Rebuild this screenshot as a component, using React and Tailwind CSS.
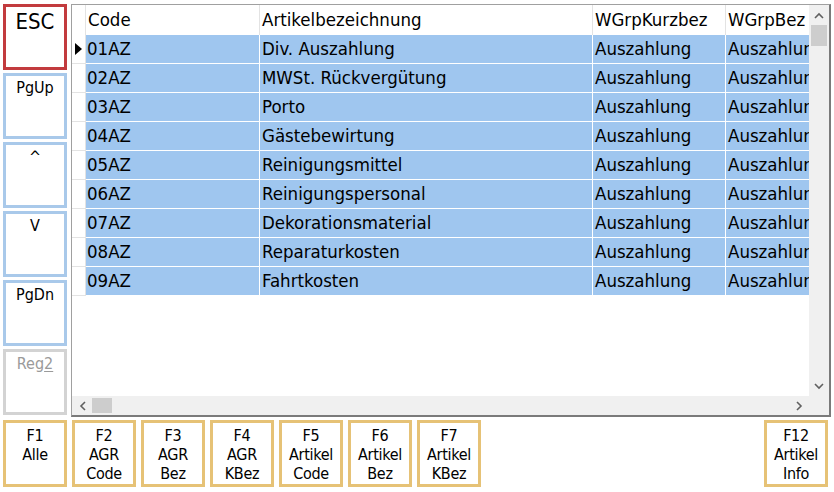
import React from "react";

const rows = [
  ["01AZ", "Div. Auszahlung"],
  ["02AZ", "MWSt. Rückvergütung"],
  ["03AZ", "Porto"],
  ["04AZ", "Gästebewirtung"],
  ["05AZ", "Reinigungsmittel"],
  ["06AZ", "Reinigungspersonal"],
  ["07AZ", "Dekorationsmaterial"],
  ["08AZ", "Reparaturkosten"],
  ["09AZ", "Fahrtkosten"],
];

const font = { fontFamily: "Tahoma, 'DejaVu Sans Condensed', 'DejaVu Sans', sans-serif" };

function SideBtn({ label, tone }) {
  const cls =
    tone === "red"
      ? "border-[#c23b3e] text-[22px] text-black"
      : tone === "grey"
      ? "border-[#d3d3d3] text-[16px] text-[#9a9a9a]"
      : "border-[#a9c9ea] text-[16px] text-black";
  return (
    <div className={`h-[66px] w-[64px] border-[3px] bg-white flex justify-center leading-none pt-[4px] ${cls}`}>
      {label}
    </div>
  );
}

function FBtn({ lines }) {
  return (
    <div className="h-[67px] w-[64px] shrink-0 border-[3px] border-[#e6c276] bg-white flex flex-col items-center pt-[3px] text-[16px] leading-[19px] text-black tracking-[-0.3px]">
      {lines.map((l, i) => (
        <span key={i}>{l}</span>
      ))}
    </div>
  );
}

export default function App() {
  return (
    <div className="w-[834px] h-[492px] bg-white overflow-hidden" style={font}>
      <div className="flex pt-[4px] pl-[3px] gap-[4px]">
        <div className="flex flex-col gap-[3px] w-[64px] shrink-0">
          <SideBtn label="ESC" tone="red" />
          <SideBtn label="PgUp" />
          <SideBtn label="^" />
          <SideBtn label="V" />
          <SideBtn label="PgDn" />
          <SideBtn label={<span>Reg<span className="underline underline-offset-2">2</span></span>} tone="grey" />
        </div>
        <div className="w-[760px] h-[413px] shrink-0 border-t border-l border-[#a0a0a0] border-r-2 border-b-2 border-r-[#7a7a7a] border-b-[#7a7a7a] flex flex-col">
          <div className="flex flex-1 min-h-0">
            <div className="flex-1 min-w-0 overflow-hidden flex flex-col text-[18.5px] leading-none text-black">
              <div className="flex h-[30px] bg-white shrink-0">
                <div className="w-[14px] shrink-0 border-r border-[#e3e3e3]" />
                <div className="w-[174px] shrink-0 border-r border-[#e3e3e3] flex items-center pl-[2px]">Code</div>
                <div className="w-[333px] shrink-0 border-r border-[#e3e3e3] flex items-center pl-[2px]">Artikelbezeichnung</div>
                <div className="w-[133px] shrink-0 border-r border-[#e3e3e3] flex items-center pl-[2px]">WGrpKurzbez</div>
                <div className="flex-1 min-w-0 flex items-center pl-[2px] whitespace-nowrap overflow-hidden">WGrpBez</div>
              </div>
              {rows.map(([c, n], i) => (
                <div key={c} className="flex h-[29px] shrink-0">
                  <div className="w-[14px] shrink-0 bg-white border-b border-r border-[#e3e3e3] flex items-center">
                    {i === 0 && (
                      <svg width="8" height="12" viewBox="0 0 8 12" className="ml-[3px]">
                        <path d="M0 0 L7 6 L0 12 Z" fill="#000" />
                      </svg>
                    )}
                  </div>
                  <div className="flex flex-1 min-w-0 bg-[#9fc6ef] border-b border-white">
                    <div className="w-[174px] shrink-0 border-r border-white flex items-center pl-[1px]">{c}</div>
                    <div className="w-[333px] shrink-0 border-r border-white flex items-center pl-[2px]">{n}</div>
                    <div className="w-[133px] shrink-0 border-r border-white flex items-center pl-[2px]">Auszahlung</div>
                    <div className="flex-1 min-w-0 flex items-center pl-[2px] whitespace-nowrap overflow-hidden">Auszahlung</div>
                  </div>
                </div>
              ))}
            </div>
            <div className="w-[20px] shrink-0 bg-[#f0f0f0] flex flex-col items-center">
              <div className="h-[20px] flex items-center justify-center">
                <svg width="10" height="7" viewBox="0 0 10 7">
                  <path d="M1 6 L5 2 L9 6" stroke="#606060" strokeWidth="1.6" fill="none" />
                </svg>
              </div>
              <div className="w-[16px] h-[21px] bg-[#cdcdcd]" />
              <div className="flex-1" />
              <div className="h-[20px] flex items-center justify-center">
                <svg width="10" height="7" viewBox="0 0 10 7">
                  <path d="M1 1 L5 5 L9 1" stroke="#606060" strokeWidth="1.6" fill="none" />
                </svg>
              </div>
            </div>
          </div>
          <div className="h-[19px] shrink-0 flex bg-[#f0f0f0]">
            <div className="w-[20px] flex items-center justify-center">
              <svg width="7" height="10" viewBox="0 0 7 10">
                <path d="M6 1 L2 5 L6 9" stroke="#606060" strokeWidth="1.6" fill="none" />
              </svg>
            </div>
            <div className="w-[20px] h-[15px] mt-[2px] bg-[#cdcdcd]" />
            <div className="flex-1" />
            <div className="w-[20px] flex items-center justify-center">
              <svg width="7" height="10" viewBox="0 0 7 10">
                <path d="M1 1 L5 5 L1 9" stroke="#606060" strokeWidth="1.6" fill="none" />
              </svg>
            </div>
            <div className="w-[20px] bg-[#f0f0f0]" />
          </div>
        </div>
      </div>
      <div className="flex pl-[3px] pr-[6px] mt-[3px]">
        <div className="flex gap-[5px]">
          <FBtn lines={["F1", "Alle"]} />
          <FBtn lines={["F2", "AGR", "Code"]} />
          <FBtn lines={["F3", "AGR", "Bez"]} />
          <FBtn lines={["F4", "AGR", "KBez"]} />
          <FBtn lines={["F5", "Artikel", "Code"]} />
          <FBtn lines={["F6", "Artikel", "Bez"]} />
          <FBtn lines={["F7", "Artikel", "KBez"]} />
        </div>
        <div className="flex-1" />
        <FBtn lines={["F12", "Artikel", "Info"]} />
      </div>
    </div>
  );
}
